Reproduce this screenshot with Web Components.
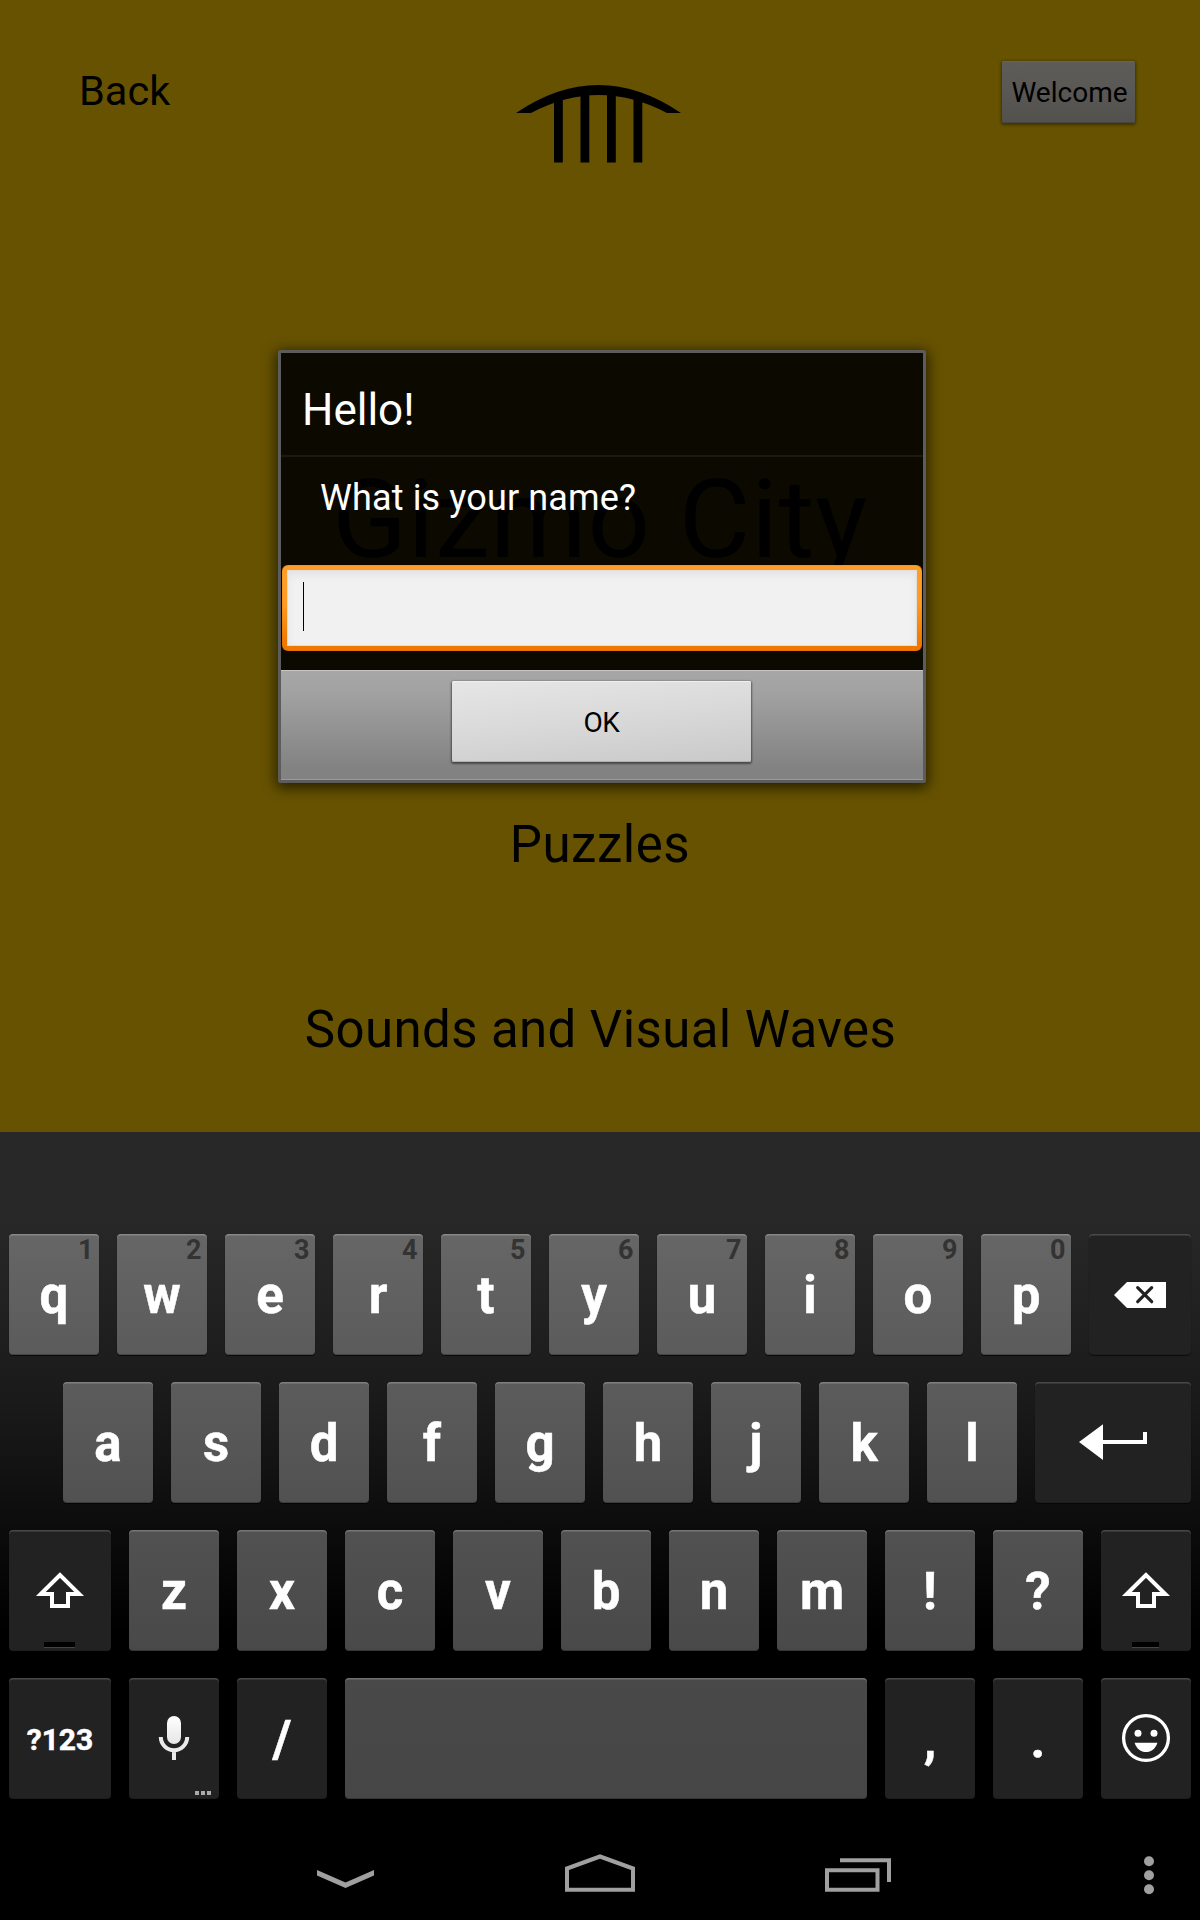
<!DOCTYPE html>
<html lang="en">
<head>
<meta charset="utf-8">
<title>Gizmo City</title>
<style>
html,body{margin:0;padding:0;background:#000}
body{width:1200px;height:1920px;overflow:hidden;font-family:Roboto,sans-serif}
</style>
</head>
<body>
<tablet-screen></tablet-screen>
<script>
const define = (name, html) => customElements.define(name, class extends HTMLElement {
  constructor() {
    super();
    this.attachShadow({ mode: 'open' }).innerHTML = html;
  }
});

define('app-logo', `
<style>:host{display:block;width:176px;height:88px}svg{display:block;filter:blur(.6px)}</style>
<svg width="176" height="88" viewBox="510 78 176 88">
  <path d="M516 112Q598.500 56 681 112H667Q599 76 531 112Z"/>
  <path d="M554 95h8.800v66.500h-8.800zM580.500 90h8.800v71.500h-8.800zM607 90h8.800v71.500H607zM633.500 95h8.800v66.500h-8.800z"/>
</svg>`);

define('dim-button', `
<style>
:host{display:flex;box-sizing:border-box;width:133px;height:62px;border-radius:2px;justify-content:center;align-items:center;
font-size:28px;line-height:62px;color:#000;background:linear-gradient(#5d5c59,#5a5955 40%,#52514d);
box-shadow:0 1px 3px 1px rgba(0,0,0,.4),inset 0 1px #656461,inset 0 -1px #484744}
span{padding:1px 0 0 2px}
</style><span><slot></slot></span>`);

define('app-page', `
<style>
:host{display:flex;flex-direction:column;align-items:center;height:1132px;background:#665200;color:#000;box-sizing:border-box}
header{display:grid;grid-template-columns:431px 176px 1fr;justify-items:start;align-items:start;align-self:stretch;height:455px;flex:none;padding:61px 65px 0 79px;box-sizing:border-box}
.back{font-size:41.500px;line-height:50px;margin-top:5px}
app-logo{margin-top:18px}
dim-button{justify-self:end}
.title{font-size:110px;line-height:130px;height:130px;white-space:nowrap;letter-spacing:.7px}
.link{font-size:51px;line-height:60px;height:60px;white-space:nowrap;letter-spacing:.4px}
.p{margin-top:230px;letter-spacing:.55px}.s{margin-top:125px;padding-left:1px}
</style>
<header><div class="back">Back</div><app-logo></app-logo><dim-button>Welcome</dim-button></header>
<div class="title">Gizmo City</div>
<div class="link p">Puzzles</div>
<div class="link s">Sounds and Visual Waves</div>`);

define('name-dialog', `
<style>
:host{display:flex;flex-direction:column;box-sizing:border-box;width:648px;height:433px;border:3px solid #5c5c5c;border-radius:3px;
color:#fff;box-shadow:0 3px 13px 2px rgba(0,0,0,.62)}
.title{height:102px;box-sizing:border-box;padding:31px 0 0 21px;font-size:44px;line-height:52px;background:rgba(0,0,0,.89)}
.rule{height:2px;background:#1b1911}
.body{height:213px;box-sizing:border-box;padding:20px 1px 0;background:rgba(0,0,0,.89)}
.msg{font-size:36px;line-height:42px;height:88px;padding-left:38px;box-sizing:border-box;letter-spacing:.13px}
.field{display:flex;box-sizing:border-box;height:86px;padding:5px;border-radius:6px;background:linear-gradient(#ff9e28,#ff9a20 45%,#f07800 90%);box-shadow:inset 0 0 1px #8a4a00}
.inner{flex:1;background:#f1f1f1;box-shadow:inset 0 4px 8px #e0e0e0,inset 0 0 0 1px #ddd;padding:12px 0 0 16px}
.caret{width:1px;height:49px;background:#000}
.foot{flex:1;display:flex;justify-content:center;box-sizing:border-box;padding:11px 1px 0 0;background:linear-gradient(#a7a7a7,#a2a2a2 20%,#828282 90%);box-shadow:inset 0 1px #c6c6c6,inset 0 -1px #9a9a9a}
.ok{width:299px;height:81px;border-radius:2px;font-size:28px;letter-spacing:-.3px;line-height:83px;text-align:center;color:#000;
background:linear-gradient(174deg,#e6e6e6,#dadada 45%,#c9c9c9);box-shadow:0 1px 2px 1px rgba(0,0,0,.45),inset 0 1px #efefef,inset 0 -1px #b0b0b0}
</style>
<div class="title">Hello!</div><div class="rule"></div>
<div class="body"><div class="msg">What is your name?</div><div class="field"><div class="inner"><div class="caret"></div></div></div></div>
<div class="foot"><div class="ok">OK</div></div>`);

define('kb-key', `
<style>
:host{display:block;position:relative;box-sizing:border-box;width:90px;height:121px;border-radius:4px;flex:none;color:#fff;
font-weight:700;font-size:51px;line-height:124px;text-align:center;-webkit-text-stroke:.5px currentColor;
background:linear-gradient(var(--a),var(--b));box-shadow:0 1px 1px rgba(0,0,0,.7),inset 0 1.500px rgba(255,255,255,.22),inset 0 -1px rgba(0,0,0,.25)}
:host([dark]){background:#222;box-shadow:0 1px 1px rgba(0,0,0,.6),inset 0 1.500px rgba(255,255,255,.18),inset 0 -1px rgba(0,0,0,.15)}
:host([w="102"]){width:102px}:host([w="156"]){width:156px}:host([w="522"]){width:522px}
:host([small]){font-size:30px}
::slotted(svg){display:block}
::slotted(small){position:absolute;right:5.500px;top:0;font-size:27px;line-height:32px;color:#333;-webkit-text-stroke:0}
</style><slot></slot>`);

const shift = (w) => {
  const c = w / 2, d = w === 102 ? 15.5 : 13.5;
  return `<kb-key dark w="${w}"><svg width="${w}" height="121"><path d="M${c} 45L${c - 19.2} 64H${c - 8}V76H${c + 8}V64H${c + 19.2}Z" fill="none" stroke="#fff" stroke-width="4"/><path d="M${c - d - .5} 112h${2 * d}v5h-${2 * d}z"/><path d="M${c - d - .5} 117h${2 * d}v1h-${2 * d}z" fill="#444"/></svg></kb-key>`;
};
const keys = (s, hints) => [...s].map((c, i) => `<kb-key>${c}${hints ? `<small>${hints[i]}</small>` : ''}</kb-key>`).join('');

define('soft-keyboard', `
<style>
:host{display:flex;flex-direction:column;gap:27px;height:692px;box-sizing:border-box;padding:102px 9px 0;
background:linear-gradient(#282828 0,#282828 85px,#1f1f1f 200px,#1a1a1a 270px,#0e0e0e 375px,#000 500px)}
.row{display:flex;gap:18px;height:121px}
.r1{--a:#666;--b:#5b5b5b}.r2{--a:#5c5c5c;--b:#515151;padding-left:54px}.r3{--a:#515151;--b:#494949}.r4{--a:#494949;--b:#464646}
</style>
<div class="row r1">${keys('qwertyuiop', '1234567890')}<kb-key dark w="102"><svg width="102" height="121"><path d="M25 61L38 48H77V74H38Z" fill="#fff"/><path d="M48.700 53.700l14 14m0-14l-14 14" stroke="#222" stroke-width="3.200"  stroke-linecap="round"/></svg></kb-key></div>
<div class="row r2">${keys('asdfghjkl')}<kb-key dark w="156"><svg width="156" height="121"><path d="M44 60L68 42.300V58H108V50H112V62H68V78Z" fill="#fff"/></svg></kb-key></div>
<div class="row r3">${shift(102)}${keys('zxcvbnm!?')}${shift(90)}</div>
<div class="row r4"><kb-key dark small w="102">?123</kb-key>
<kb-key dark><svg width="90" height="121"><defs><linearGradient id="g" x1="0" y1="0" x2="0" y2="1"><stop stop-color="#fff"/><stop offset="1" stop-color="#e6e6e6"/></linearGradient></defs><rect x="38" y="38" width="14" height="28" rx="7" fill="url(#g)"/><path d="M31.800 59A13.200 13.200 0 0 0 58.200 59M45 72V82" fill="none" stroke="#eaeaea" stroke-width="4"/><path d="M66 113h4v4h-4zM72 113h4v4h-4zM78 113h4v4h-4z" fill="#aaa"/></svg></kb-key>
<kb-key dark>/</kb-key><kb-key w="522"></kb-key><kb-key dark>,</kb-key><kb-key dark>.</kb-key>
<kb-key dark><svg width="90" height="121"><circle cx="45" cy="60" r="22.400" fill="none" stroke="#fff" stroke-width="3.300"/><circle cx="37" cy="55.300" r="3.500" fill="#fff"/><circle cx="53" cy="55.300" r="3.500" fill="#fff"/><path d="M33.600 64.700H56.400C54.500 71 50 74 45 74S35.500 71 33.600 64.700Z" fill="#fff"/></svg></kb-key></div>`);

define('nav-bar', `
<style>
:host{display:flex;align-items:center;height:96px;background:#000;box-sizing:border-box;padding-left:317px}
svg{display:block;fill:none;stroke:#a0a0a0;stroke-width:4}
.f{fill:#a0a0a0;stroke:none}
.home{margin-left:191px}.rec{margin-left:190px}.more{margin-left:252px}
</style>
<svg class="f" width="57" height="96"><path d="M0 46L28.500 58.500L57 46V51.500L28.500 64L0 51.500Z"/></svg>
<svg class="home" width="70" height="96"><path d="M2 44.500L35 32.500L68 44.500V65.700H2Z"/></svg>
<svg class="rec" width="67" height="96"><path d="M2 46.200H52.500V65.700H2ZM15 36.200H64V58"/></svg>
<svg class="more f" width="10" height="96"><circle cx="5" cy="37.300" r="5"/><circle cx="5" cy="51.300" r="5"/><circle cx="5" cy="65.300" r="5"/></svg>`);

define('tablet-screen', `
<style>
:host{display:flex;flex-direction:column;position:relative;width:1200px;height:1920px;background:#000}
name-dialog{position:absolute;left:278px;top:350px}
</style>
<app-page></app-page><soft-keyboard></soft-keyboard><nav-bar></nav-bar><name-dialog></name-dialog>`);
</script>
</body>
</html>
